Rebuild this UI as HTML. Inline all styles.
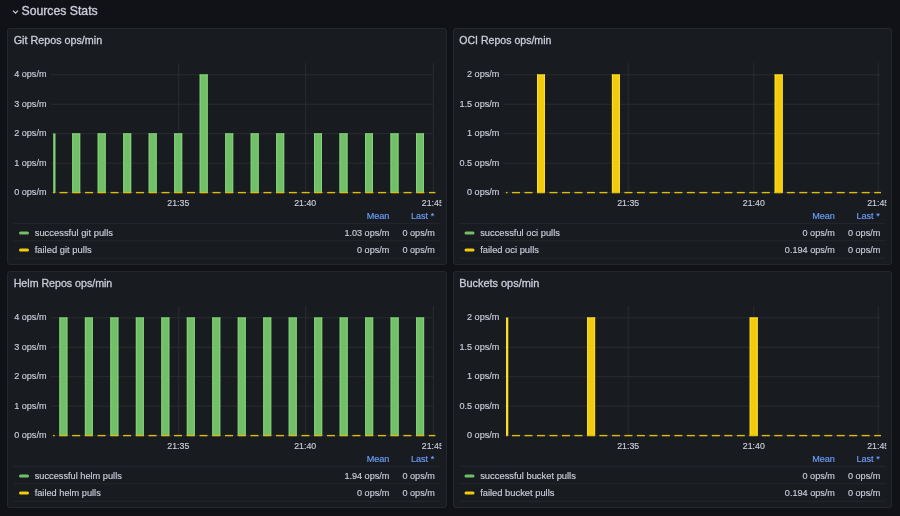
<!DOCTYPE html>
<html><head><meta charset="utf-8"><style>
html,body{margin:0;padding:0;background:#111217;width:900px;height:516px;overflow:hidden;font-family:"Liberation Sans", sans-serif;}
.panel{position:absolute;background:#181b1f;border:1px solid #25272d;border-radius:3px;box-sizing:border-box;}
svg{position:absolute;left:0;top:0;will-change:transform;}
text{font-family:"Liberation Sans", sans-serif;}
</style></head><body>
<div class="panel" style="left:7px;top:27.5px;width:439.5px;height:237px;"></div>
<div class="panel" style="left:452.5px;top:27.5px;width:439.5px;height:237px;"></div>
<div class="panel" style="left:7px;top:270.5px;width:439.5px;height:237px;"></div>
<div class="panel" style="left:452.5px;top:270.5px;width:439.5px;height:237px;"></div>
<svg width="900" height="516" viewBox="0 0 900 516">
<path d="M13 10.6 L15.5 13.1 L18 10.6" fill="none" stroke="#ccccdc" stroke-width="1.2"/>
<text x="21.5" y="15.1" font-size="12.2" fill="#ccccdc" text-anchor="start" stroke="#ccccdc" stroke-width="0.35" textLength="76.2" lengthAdjust="spacingAndGlyphs">Sources Stats</text>
<text x="13.7" y="44" font-size="10.75" fill="#ccccdc" text-anchor="start" stroke="#ccccdc" stroke-width="0.3" textLength="88.5" lengthAdjust="spacingAndGlyphs">Git Repos ops/min</text>
<line x1="51" y1="74.8" x2="434" y2="74.8" stroke="#2a2c31" stroke-width="1"/>
<text x="46.5" y="77.4" font-size="9.1" fill="#ccccdc" text-anchor="end" stroke="#ccccdc" stroke-width="0.15">4 ops/m</text>
<line x1="51" y1="104.25" x2="434" y2="104.25" stroke="#2a2c31" stroke-width="1"/>
<text x="46.5" y="106.85" font-size="9.1" fill="#ccccdc" text-anchor="end" stroke="#ccccdc" stroke-width="0.15">3 ops/m</text>
<line x1="51" y1="133.7" x2="434" y2="133.7" stroke="#2a2c31" stroke-width="1"/>
<text x="46.5" y="136.3" font-size="9.1" fill="#ccccdc" text-anchor="end" stroke="#ccccdc" stroke-width="0.15">2 ops/m</text>
<line x1="51" y1="163.15" x2="434" y2="163.15" stroke="#2a2c31" stroke-width="1"/>
<text x="46.5" y="165.75" font-size="9.1" fill="#ccccdc" text-anchor="end" stroke="#ccccdc" stroke-width="0.15">1 ops/m</text>
<line x1="51" y1="192.6" x2="434" y2="192.6" stroke="#2a2c31" stroke-width="1"/>
<text x="46.5" y="195.2" font-size="9.1" fill="#ccccdc" text-anchor="end" stroke="#ccccdc" stroke-width="0.15">0 ops/m</text>
<line x1="178.8" y1="63" x2="178.8" y2="192.6" stroke="#2a2c31" stroke-width="1"/>
<line x1="305.7" y1="63" x2="305.7" y2="192.6" stroke="#2a2c31" stroke-width="1"/>
<line x1="433.3" y1="63" x2="433.3" y2="192.6" stroke="#2a2c31" stroke-width="1"/>
<clipPath id="xgit"><rect x="0" y="190.0" width="441.4" height="20"/></clipPath><g clip-path="url(#xgit)">
<text x="178.3" y="205.9" font-size="9.2" fill="#ccccdc" text-anchor="middle" stroke="#ccccdc" stroke-width="0.15" textLength="22" lengthAdjust="spacingAndGlyphs">21:35</text>
<text x="305.2" y="205.9" font-size="9.2" fill="#ccccdc" text-anchor="middle" stroke="#ccccdc" stroke-width="0.15" textLength="22" lengthAdjust="spacingAndGlyphs">21:40</text>
<text x="432.8" y="205.9" font-size="9.2" fill="#ccccdc" text-anchor="middle" stroke="#ccccdc" stroke-width="0.15" textLength="22" lengthAdjust="spacingAndGlyphs">21:45</text>
</g>
<clipPath id="cgit"><rect x="53" y="40.0" width="382.4" height="170"/></clipPath>
<g clip-path="url(#cgit)">
<rect x="53.2" y="133.4" width="2.3" height="59.5" fill="#7fd474"/>
<rect x="72.2" y="133.4" width="8" height="59.5" fill="#73bf69"/>
<rect x="72.2" y="133.4" width="1" height="59.5" fill="#7fd474"/>
<rect x="79.2" y="133.4" width="1" height="59.5" fill="#7fd474"/>
<rect x="72.2" y="133.4" width="8" height="1" fill="#7fd474"/>
<rect x="97.7" y="133.4" width="8" height="59.5" fill="#73bf69"/>
<rect x="97.7" y="133.4" width="1" height="59.5" fill="#7fd474"/>
<rect x="104.7" y="133.4" width="1" height="59.5" fill="#7fd474"/>
<rect x="97.7" y="133.4" width="8" height="1" fill="#7fd474"/>
<rect x="123.2" y="133.4" width="8" height="59.5" fill="#73bf69"/>
<rect x="123.2" y="133.4" width="1" height="59.5" fill="#7fd474"/>
<rect x="130.2" y="133.4" width="1" height="59.5" fill="#7fd474"/>
<rect x="123.2" y="133.4" width="8" height="1" fill="#7fd474"/>
<rect x="148.7" y="133.4" width="8" height="59.5" fill="#73bf69"/>
<rect x="148.7" y="133.4" width="1" height="59.5" fill="#7fd474"/>
<rect x="155.7" y="133.4" width="1" height="59.5" fill="#7fd474"/>
<rect x="148.7" y="133.4" width="8" height="1" fill="#7fd474"/>
<rect x="174.2" y="133.4" width="8" height="59.5" fill="#73bf69"/>
<rect x="174.2" y="133.4" width="1" height="59.5" fill="#7fd474"/>
<rect x="181.2" y="133.4" width="1" height="59.5" fill="#7fd474"/>
<rect x="174.2" y="133.4" width="8" height="1" fill="#7fd474"/>
<rect x="199.7" y="74.5" width="8" height="118.4" fill="#73bf69"/>
<rect x="199.7" y="74.5" width="1" height="118.4" fill="#7fd474"/>
<rect x="206.7" y="74.5" width="1" height="118.4" fill="#7fd474"/>
<rect x="199.7" y="74.5" width="8" height="1" fill="#7fd474"/>
<rect x="225.2" y="133.4" width="8" height="59.5" fill="#73bf69"/>
<rect x="225.2" y="133.4" width="1" height="59.5" fill="#7fd474"/>
<rect x="232.2" y="133.4" width="1" height="59.5" fill="#7fd474"/>
<rect x="225.2" y="133.4" width="8" height="1" fill="#7fd474"/>
<rect x="250.7" y="133.4" width="8" height="59.5" fill="#73bf69"/>
<rect x="250.7" y="133.4" width="1" height="59.5" fill="#7fd474"/>
<rect x="257.7" y="133.4" width="1" height="59.5" fill="#7fd474"/>
<rect x="250.7" y="133.4" width="8" height="1" fill="#7fd474"/>
<rect x="276.2" y="133.4" width="8" height="59.5" fill="#73bf69"/>
<rect x="276.2" y="133.4" width="1" height="59.5" fill="#7fd474"/>
<rect x="283.2" y="133.4" width="1" height="59.5" fill="#7fd474"/>
<rect x="276.2" y="133.4" width="8" height="1" fill="#7fd474"/>
<rect x="314" y="133.4" width="8" height="59.5" fill="#73bf69"/>
<rect x="314" y="133.4" width="1" height="59.5" fill="#7fd474"/>
<rect x="321" y="133.4" width="1" height="59.5" fill="#7fd474"/>
<rect x="314" y="133.4" width="8" height="1" fill="#7fd474"/>
<rect x="339.5" y="133.4" width="8" height="59.5" fill="#73bf69"/>
<rect x="339.5" y="133.4" width="1" height="59.5" fill="#7fd474"/>
<rect x="346.5" y="133.4" width="1" height="59.5" fill="#7fd474"/>
<rect x="339.5" y="133.4" width="8" height="1" fill="#7fd474"/>
<rect x="365" y="133.4" width="8" height="59.5" fill="#73bf69"/>
<rect x="365" y="133.4" width="1" height="59.5" fill="#7fd474"/>
<rect x="372" y="133.4" width="1" height="59.5" fill="#7fd474"/>
<rect x="365" y="133.4" width="8" height="1" fill="#7fd474"/>
<rect x="390.5" y="133.4" width="8" height="59.5" fill="#73bf69"/>
<rect x="390.5" y="133.4" width="1" height="59.5" fill="#7fd474"/>
<rect x="397.5" y="133.4" width="1" height="59.5" fill="#7fd474"/>
<rect x="390.5" y="133.4" width="8" height="1" fill="#7fd474"/>
<rect x="416" y="133.4" width="8" height="59.5" fill="#73bf69"/>
<rect x="416" y="133.4" width="1" height="59.5" fill="#7fd474"/>
<rect x="423" y="133.4" width="1" height="59.5" fill="#7fd474"/>
<rect x="416" y="133.4" width="8" height="1" fill="#7fd474"/>
<rect x="34.12" y="191.9" width="8" height="1.4" fill="#dcbc0c"/>
<rect x="46.86" y="191.9" width="8" height="1.4" fill="#dcbc0c"/>
<rect x="59.6" y="191.9" width="8" height="1.4" fill="#dcbc0c"/>
<rect x="72.34" y="191.9" width="8" height="1.4" fill="#dcbc0c"/>
<rect x="85.08" y="191.9" width="8" height="1.4" fill="#dcbc0c"/>
<rect x="97.82" y="191.9" width="8" height="1.4" fill="#dcbc0c"/>
<rect x="110.56" y="191.9" width="8" height="1.4" fill="#dcbc0c"/>
<rect x="123.3" y="191.9" width="8" height="1.4" fill="#dcbc0c"/>
<rect x="136.04" y="191.9" width="8" height="1.4" fill="#dcbc0c"/>
<rect x="148.78" y="191.9" width="8" height="1.4" fill="#dcbc0c"/>
<rect x="161.52" y="191.9" width="8" height="1.4" fill="#dcbc0c"/>
<rect x="174.26" y="191.9" width="8" height="1.4" fill="#dcbc0c"/>
<rect x="187" y="191.9" width="8" height="1.4" fill="#dcbc0c"/>
<rect x="199.74" y="191.9" width="8" height="1.4" fill="#dcbc0c"/>
<rect x="212.48" y="191.9" width="8" height="1.4" fill="#dcbc0c"/>
<rect x="225.22" y="191.9" width="8" height="1.4" fill="#dcbc0c"/>
<rect x="237.96" y="191.9" width="8" height="1.4" fill="#dcbc0c"/>
<rect x="250.7" y="191.9" width="8" height="1.4" fill="#dcbc0c"/>
<rect x="263.44" y="191.9" width="8" height="1.4" fill="#dcbc0c"/>
<rect x="276.18" y="191.9" width="8" height="1.4" fill="#dcbc0c"/>
<rect x="288.92" y="191.9" width="8" height="1.4" fill="#dcbc0c"/>
<rect x="301.66" y="191.9" width="8" height="1.4" fill="#dcbc0c"/>
<rect x="314.4" y="191.9" width="8" height="1.4" fill="#dcbc0c"/>
<rect x="327.14" y="191.9" width="8" height="1.4" fill="#dcbc0c"/>
<rect x="339.88" y="191.9" width="8" height="1.4" fill="#dcbc0c"/>
<rect x="352.62" y="191.9" width="8" height="1.4" fill="#dcbc0c"/>
<rect x="365.36" y="191.9" width="8" height="1.4" fill="#dcbc0c"/>
<rect x="378.1" y="191.9" width="8" height="1.4" fill="#dcbc0c"/>
<rect x="390.84" y="191.9" width="8" height="1.4" fill="#dcbc0c"/>
<rect x="403.58" y="191.9" width="8" height="1.4" fill="#dcbc0c"/>
<rect x="416.32" y="191.9" width="8" height="1.4" fill="#dcbc0c"/>
<rect x="429.06" y="191.9" width="8" height="1.4" fill="#dcbc0c"/>
</g>
<line x1="13.4" y1="223.3" x2="440.2" y2="223.3" stroke="#25272d" stroke-width="1"/>
<line x1="13.4" y1="240.8" x2="440.2" y2="240.8" stroke="#25272d" stroke-width="1"/>
<line x1="13.4" y1="258.2" x2="440.2" y2="258.2" stroke="#25272d" stroke-width="1"/>
<text x="389.4" y="218.8" font-size="9.1" fill="#6e9fff" text-anchor="end" stroke="#6e9fff" stroke-width="0.15">Mean</text>
<text x="434.2" y="218.8" font-size="9.1" fill="#6e9fff" text-anchor="end" stroke="#6e9fff" stroke-width="0.15">Last *</text>
<rect x="19" y="231.5" width="10" height="3" fill="#73bf69" rx="1.5"/>
<text x="34.7" y="235.7" font-size="9.4" fill="#ccccdc" text-anchor="start" stroke="#ccccdc" stroke-width="0.15" textLength="78.3" lengthAdjust="spacingAndGlyphs">successful git pulls</text>
<text x="389.4" y="235.7" font-size="9.1" fill="#ccccdc" text-anchor="end" stroke="#ccccdc" stroke-width="0.15">1.03 ops/m</text>
<text x="434.8" y="235.7" font-size="9.1" fill="#ccccdc" text-anchor="end" stroke="#ccccdc" stroke-width="0.15">0 ops/m</text>
<rect x="19" y="248.5" width="10" height="3" fill="#f2cc0c" rx="1.5"/>
<text x="34.7" y="252.7" font-size="9.4" fill="#ccccdc" text-anchor="start" stroke="#ccccdc" stroke-width="0.15" textLength="57" lengthAdjust="spacingAndGlyphs">failed git pulls</text>
<text x="389.4" y="252.7" font-size="9.1" fill="#ccccdc" text-anchor="end" stroke="#ccccdc" stroke-width="0.15">0 ops/m</text>
<text x="434.8" y="252.7" font-size="9.1" fill="#ccccdc" text-anchor="end" stroke="#ccccdc" stroke-width="0.15">0 ops/m</text>
<text x="459.2" y="44" font-size="10.75" fill="#ccccdc" text-anchor="start" stroke="#ccccdc" stroke-width="0.3" textLength="92.2" lengthAdjust="spacingAndGlyphs">OCI Repos ops/min</text>
<line x1="503.2" y1="74.8" x2="880" y2="74.8" stroke="#2a2c31" stroke-width="1"/>
<text x="499.4" y="77.4" font-size="9.1" fill="#ccccdc" text-anchor="end" stroke="#ccccdc" stroke-width="0.15">2 ops/m</text>
<line x1="503.2" y1="104.25" x2="880" y2="104.25" stroke="#2a2c31" stroke-width="1"/>
<text x="499.4" y="106.85" font-size="9.1" fill="#ccccdc" text-anchor="end" stroke="#ccccdc" stroke-width="0.15">1.5 ops/m</text>
<line x1="503.2" y1="133.7" x2="880" y2="133.7" stroke="#2a2c31" stroke-width="1"/>
<text x="499.4" y="136.3" font-size="9.1" fill="#ccccdc" text-anchor="end" stroke="#ccccdc" stroke-width="0.15">1 ops/m</text>
<line x1="503.2" y1="163.15" x2="880" y2="163.15" stroke="#2a2c31" stroke-width="1"/>
<text x="499.4" y="165.75" font-size="9.1" fill="#ccccdc" text-anchor="end" stroke="#ccccdc" stroke-width="0.15">0.5 ops/m</text>
<line x1="503.2" y1="192.6" x2="880" y2="192.6" stroke="#2a2c31" stroke-width="1"/>
<text x="499.4" y="195.2" font-size="9.1" fill="#ccccdc" text-anchor="end" stroke="#ccccdc" stroke-width="0.15">0 ops/m</text>
<line x1="628.2" y1="63" x2="628.2" y2="192.6" stroke="#2a2c31" stroke-width="1"/>
<line x1="753.8" y1="63" x2="753.8" y2="192.6" stroke="#2a2c31" stroke-width="1"/>
<line x1="878.2" y1="63" x2="878.2" y2="192.6" stroke="#2a2c31" stroke-width="1"/>
<clipPath id="xoci"><rect x="0" y="190.0" width="886.3" height="20"/></clipPath><g clip-path="url(#xoci)">
<text x="628.2" y="205.9" font-size="9.2" fill="#ccccdc" text-anchor="middle" stroke="#ccccdc" stroke-width="0.15" textLength="22" lengthAdjust="spacingAndGlyphs">21:35</text>
<text x="753.8" y="205.9" font-size="9.2" fill="#ccccdc" text-anchor="middle" stroke="#ccccdc" stroke-width="0.15" textLength="22" lengthAdjust="spacingAndGlyphs">21:40</text>
<text x="878.2" y="205.9" font-size="9.2" fill="#ccccdc" text-anchor="middle" stroke="#ccccdc" stroke-width="0.15" textLength="22" lengthAdjust="spacingAndGlyphs">21:45</text>
</g>
<clipPath id="coci"><rect x="506" y="40.0" width="375.1" height="170"/></clipPath>
<g clip-path="url(#coci)">
<rect x="537" y="74.5" width="8" height="118.4" fill="#f2cc0c"/>
<rect x="537" y="74.5" width="1" height="118.4" fill="#fade2a"/>
<rect x="544" y="74.5" width="1" height="118.4" fill="#fade2a"/>
<rect x="537" y="74.5" width="8" height="1" fill="#fade2a"/>
<rect x="611.9" y="74.5" width="8" height="118.4" fill="#f2cc0c"/>
<rect x="611.9" y="74.5" width="1" height="118.4" fill="#fade2a"/>
<rect x="618.9" y="74.5" width="1" height="118.4" fill="#fade2a"/>
<rect x="611.9" y="74.5" width="8" height="1" fill="#fade2a"/>
<rect x="774.7" y="74.5" width="8" height="118.4" fill="#f2cc0c"/>
<rect x="774.7" y="74.5" width="1" height="118.4" fill="#fade2a"/>
<rect x="781.7" y="74.5" width="1" height="118.4" fill="#fade2a"/>
<rect x="774.7" y="74.5" width="8" height="1" fill="#fade2a"/>
<rect x="487.02" y="191.9" width="8" height="1.4" fill="#dcbc0c"/>
<rect x="499.51" y="191.9" width="8" height="1.4" fill="#dcbc0c"/>
<rect x="512" y="191.9" width="8" height="1.4" fill="#dcbc0c"/>
<rect x="524.49" y="191.9" width="8" height="1.4" fill="#dcbc0c"/>
<rect x="536.98" y="191.9" width="8" height="1.4" fill="#dcbc0c"/>
<rect x="549.47" y="191.9" width="8" height="1.4" fill="#dcbc0c"/>
<rect x="561.96" y="191.9" width="8" height="1.4" fill="#dcbc0c"/>
<rect x="574.45" y="191.9" width="8" height="1.4" fill="#dcbc0c"/>
<rect x="586.94" y="191.9" width="8" height="1.4" fill="#dcbc0c"/>
<rect x="599.43" y="191.9" width="8" height="1.4" fill="#dcbc0c"/>
<rect x="611.92" y="191.9" width="8" height="1.4" fill="#dcbc0c"/>
<rect x="624.41" y="191.9" width="8" height="1.4" fill="#dcbc0c"/>
<rect x="636.9" y="191.9" width="8" height="1.4" fill="#dcbc0c"/>
<rect x="649.39" y="191.9" width="8" height="1.4" fill="#dcbc0c"/>
<rect x="661.88" y="191.9" width="8" height="1.4" fill="#dcbc0c"/>
<rect x="674.37" y="191.9" width="8" height="1.4" fill="#dcbc0c"/>
<rect x="686.86" y="191.9" width="8" height="1.4" fill="#dcbc0c"/>
<rect x="699.35" y="191.9" width="8" height="1.4" fill="#dcbc0c"/>
<rect x="711.84" y="191.9" width="8" height="1.4" fill="#dcbc0c"/>
<rect x="724.33" y="191.9" width="8" height="1.4" fill="#dcbc0c"/>
<rect x="736.82" y="191.9" width="8" height="1.4" fill="#dcbc0c"/>
<rect x="749.31" y="191.9" width="8" height="1.4" fill="#dcbc0c"/>
<rect x="761.8" y="191.9" width="8" height="1.4" fill="#dcbc0c"/>
<rect x="774.29" y="191.9" width="8" height="1.4" fill="#dcbc0c"/>
<rect x="786.78" y="191.9" width="8" height="1.4" fill="#dcbc0c"/>
<rect x="799.27" y="191.9" width="8" height="1.4" fill="#dcbc0c"/>
<rect x="811.76" y="191.9" width="8" height="1.4" fill="#dcbc0c"/>
<rect x="824.25" y="191.9" width="8" height="1.4" fill="#dcbc0c"/>
<rect x="836.74" y="191.9" width="8" height="1.4" fill="#dcbc0c"/>
<rect x="849.23" y="191.9" width="8" height="1.4" fill="#dcbc0c"/>
<rect x="861.72" y="191.9" width="8" height="1.4" fill="#dcbc0c"/>
<rect x="874.21" y="191.9" width="8" height="1.4" fill="#dcbc0c"/>
</g>
<line x1="458.9" y1="223.3" x2="885.7" y2="223.3" stroke="#25272d" stroke-width="1"/>
<line x1="458.9" y1="240.8" x2="885.7" y2="240.8" stroke="#25272d" stroke-width="1"/>
<line x1="458.9" y1="258.2" x2="885.7" y2="258.2" stroke="#25272d" stroke-width="1"/>
<text x="834.9" y="218.8" font-size="9.1" fill="#6e9fff" text-anchor="end" stroke="#6e9fff" stroke-width="0.15">Mean</text>
<text x="879.7" y="218.8" font-size="9.1" fill="#6e9fff" text-anchor="end" stroke="#6e9fff" stroke-width="0.15">Last *</text>
<rect x="464.5" y="231.5" width="10" height="3" fill="#73bf69" rx="1.5"/>
<text x="480.2" y="235.7" font-size="9.4" fill="#ccccdc" text-anchor="start" stroke="#ccccdc" stroke-width="0.15" textLength="79.7" lengthAdjust="spacingAndGlyphs">successful oci pulls</text>
<text x="834.9" y="235.7" font-size="9.1" fill="#ccccdc" text-anchor="end" stroke="#ccccdc" stroke-width="0.15">0 ops/m</text>
<text x="880.3" y="235.7" font-size="9.1" fill="#ccccdc" text-anchor="end" stroke="#ccccdc" stroke-width="0.15">0 ops/m</text>
<rect x="464.5" y="248.5" width="10" height="3" fill="#f2cc0c" rx="1.5"/>
<text x="480.2" y="252.7" font-size="9.4" fill="#ccccdc" text-anchor="start" stroke="#ccccdc" stroke-width="0.15" textLength="58.7" lengthAdjust="spacingAndGlyphs">failed oci pulls</text>
<text x="834.9" y="252.7" font-size="9.1" fill="#ccccdc" text-anchor="end" stroke="#ccccdc" stroke-width="0.15">0.194 ops/m</text>
<text x="880.3" y="252.7" font-size="9.1" fill="#ccccdc" text-anchor="end" stroke="#ccccdc" stroke-width="0.15">0 ops/m</text>
<text x="13.7" y="287" font-size="10.75" fill="#ccccdc" text-anchor="start" stroke="#ccccdc" stroke-width="0.3" textLength="98.6" lengthAdjust="spacingAndGlyphs">Helm Repos ops/min</text>
<line x1="51" y1="317.8" x2="434" y2="317.8" stroke="#2a2c31" stroke-width="1"/>
<text x="46.5" y="320.4" font-size="9.1" fill="#ccccdc" text-anchor="end" stroke="#ccccdc" stroke-width="0.15">4 ops/m</text>
<line x1="51" y1="347.25" x2="434" y2="347.25" stroke="#2a2c31" stroke-width="1"/>
<text x="46.5" y="349.85" font-size="9.1" fill="#ccccdc" text-anchor="end" stroke="#ccccdc" stroke-width="0.15">3 ops/m</text>
<line x1="51" y1="376.7" x2="434" y2="376.7" stroke="#2a2c31" stroke-width="1"/>
<text x="46.5" y="379.3" font-size="9.1" fill="#ccccdc" text-anchor="end" stroke="#ccccdc" stroke-width="0.15">2 ops/m</text>
<line x1="51" y1="406.15" x2="434" y2="406.15" stroke="#2a2c31" stroke-width="1"/>
<text x="46.5" y="408.75" font-size="9.1" fill="#ccccdc" text-anchor="end" stroke="#ccccdc" stroke-width="0.15">1 ops/m</text>
<line x1="51" y1="435.6" x2="434" y2="435.6" stroke="#2a2c31" stroke-width="1"/>
<text x="46.5" y="438.2" font-size="9.1" fill="#ccccdc" text-anchor="end" stroke="#ccccdc" stroke-width="0.15">0 ops/m</text>
<line x1="178.8" y1="306" x2="178.8" y2="435.6" stroke="#2a2c31" stroke-width="1"/>
<line x1="305.7" y1="306" x2="305.7" y2="435.6" stroke="#2a2c31" stroke-width="1"/>
<line x1="433.3" y1="306" x2="433.3" y2="435.6" stroke="#2a2c31" stroke-width="1"/>
<clipPath id="xhelm"><rect x="0" y="433.0" width="441.4" height="20"/></clipPath><g clip-path="url(#xhelm)">
<text x="178.3" y="448.9" font-size="9.2" fill="#ccccdc" text-anchor="middle" stroke="#ccccdc" stroke-width="0.15" textLength="22" lengthAdjust="spacingAndGlyphs">21:35</text>
<text x="305.2" y="448.9" font-size="9.2" fill="#ccccdc" text-anchor="middle" stroke="#ccccdc" stroke-width="0.15" textLength="22" lengthAdjust="spacingAndGlyphs">21:40</text>
<text x="432.8" y="448.9" font-size="9.2" fill="#ccccdc" text-anchor="middle" stroke="#ccccdc" stroke-width="0.15" textLength="22" lengthAdjust="spacingAndGlyphs">21:45</text>
</g>
<clipPath id="chelm"><rect x="53" y="283.0" width="382.4" height="170"/></clipPath>
<g clip-path="url(#chelm)">
<rect x="59.4" y="317.5" width="8" height="118.4" fill="#73bf69"/>
<rect x="59.4" y="317.5" width="1" height="118.4" fill="#7fd474"/>
<rect x="66.4" y="317.5" width="1" height="118.4" fill="#7fd474"/>
<rect x="59.4" y="317.5" width="8" height="1" fill="#7fd474"/>
<rect x="84.88" y="317.5" width="8" height="118.4" fill="#73bf69"/>
<rect x="84.88" y="317.5" width="1" height="118.4" fill="#7fd474"/>
<rect x="91.88" y="317.5" width="1" height="118.4" fill="#7fd474"/>
<rect x="84.88" y="317.5" width="8" height="1" fill="#7fd474"/>
<rect x="110.36" y="317.5" width="8" height="118.4" fill="#73bf69"/>
<rect x="110.36" y="317.5" width="1" height="118.4" fill="#7fd474"/>
<rect x="117.36" y="317.5" width="1" height="118.4" fill="#7fd474"/>
<rect x="110.36" y="317.5" width="8" height="1" fill="#7fd474"/>
<rect x="135.84" y="317.5" width="8" height="118.4" fill="#73bf69"/>
<rect x="135.84" y="317.5" width="1" height="118.4" fill="#7fd474"/>
<rect x="142.84" y="317.5" width="1" height="118.4" fill="#7fd474"/>
<rect x="135.84" y="317.5" width="8" height="1" fill="#7fd474"/>
<rect x="161.32" y="317.5" width="8" height="118.4" fill="#73bf69"/>
<rect x="161.32" y="317.5" width="1" height="118.4" fill="#7fd474"/>
<rect x="168.32" y="317.5" width="1" height="118.4" fill="#7fd474"/>
<rect x="161.32" y="317.5" width="8" height="1" fill="#7fd474"/>
<rect x="186.8" y="317.5" width="8" height="118.4" fill="#73bf69"/>
<rect x="186.8" y="317.5" width="1" height="118.4" fill="#7fd474"/>
<rect x="193.8" y="317.5" width="1" height="118.4" fill="#7fd474"/>
<rect x="186.8" y="317.5" width="8" height="1" fill="#7fd474"/>
<rect x="212.28" y="317.5" width="8" height="118.4" fill="#73bf69"/>
<rect x="212.28" y="317.5" width="1" height="118.4" fill="#7fd474"/>
<rect x="219.28" y="317.5" width="1" height="118.4" fill="#7fd474"/>
<rect x="212.28" y="317.5" width="8" height="1" fill="#7fd474"/>
<rect x="237.76" y="317.5" width="8" height="118.4" fill="#73bf69"/>
<rect x="237.76" y="317.5" width="1" height="118.4" fill="#7fd474"/>
<rect x="244.76" y="317.5" width="1" height="118.4" fill="#7fd474"/>
<rect x="237.76" y="317.5" width="8" height="1" fill="#7fd474"/>
<rect x="263.24" y="317.5" width="8" height="118.4" fill="#73bf69"/>
<rect x="263.24" y="317.5" width="1" height="118.4" fill="#7fd474"/>
<rect x="270.24" y="317.5" width="1" height="118.4" fill="#7fd474"/>
<rect x="263.24" y="317.5" width="8" height="1" fill="#7fd474"/>
<rect x="288.72" y="317.5" width="8" height="118.4" fill="#73bf69"/>
<rect x="288.72" y="317.5" width="1" height="118.4" fill="#7fd474"/>
<rect x="295.72" y="317.5" width="1" height="118.4" fill="#7fd474"/>
<rect x="288.72" y="317.5" width="8" height="1" fill="#7fd474"/>
<rect x="314.2" y="317.5" width="8" height="118.4" fill="#73bf69"/>
<rect x="314.2" y="317.5" width="1" height="118.4" fill="#7fd474"/>
<rect x="321.2" y="317.5" width="1" height="118.4" fill="#7fd474"/>
<rect x="314.2" y="317.5" width="8" height="1" fill="#7fd474"/>
<rect x="339.68" y="317.5" width="8" height="118.4" fill="#73bf69"/>
<rect x="339.68" y="317.5" width="1" height="118.4" fill="#7fd474"/>
<rect x="346.68" y="317.5" width="1" height="118.4" fill="#7fd474"/>
<rect x="339.68" y="317.5" width="8" height="1" fill="#7fd474"/>
<rect x="365.16" y="317.5" width="8" height="118.4" fill="#73bf69"/>
<rect x="365.16" y="317.5" width="1" height="118.4" fill="#7fd474"/>
<rect x="372.16" y="317.5" width="1" height="118.4" fill="#7fd474"/>
<rect x="365.16" y="317.5" width="8" height="1" fill="#7fd474"/>
<rect x="390.64" y="317.5" width="8" height="118.4" fill="#73bf69"/>
<rect x="390.64" y="317.5" width="1" height="118.4" fill="#7fd474"/>
<rect x="397.64" y="317.5" width="1" height="118.4" fill="#7fd474"/>
<rect x="390.64" y="317.5" width="8" height="1" fill="#7fd474"/>
<rect x="416.12" y="317.5" width="8" height="118.4" fill="#73bf69"/>
<rect x="416.12" y="317.5" width="1" height="118.4" fill="#7fd474"/>
<rect x="423.12" y="317.5" width="1" height="118.4" fill="#7fd474"/>
<rect x="416.12" y="317.5" width="8" height="1" fill="#7fd474"/>
<rect x="33.92" y="434.9" width="8" height="1.4" fill="#dcbc0c"/>
<rect x="46.66" y="434.9" width="8" height="1.4" fill="#dcbc0c"/>
<rect x="59.4" y="434.9" width="8" height="1.4" fill="#dcbc0c"/>
<rect x="72.14" y="434.9" width="8" height="1.4" fill="#dcbc0c"/>
<rect x="84.88" y="434.9" width="8" height="1.4" fill="#dcbc0c"/>
<rect x="97.62" y="434.9" width="8" height="1.4" fill="#dcbc0c"/>
<rect x="110.36" y="434.9" width="8" height="1.4" fill="#dcbc0c"/>
<rect x="123.1" y="434.9" width="8" height="1.4" fill="#dcbc0c"/>
<rect x="135.84" y="434.9" width="8" height="1.4" fill="#dcbc0c"/>
<rect x="148.58" y="434.9" width="8" height="1.4" fill="#dcbc0c"/>
<rect x="161.32" y="434.9" width="8" height="1.4" fill="#dcbc0c"/>
<rect x="174.06" y="434.9" width="8" height="1.4" fill="#dcbc0c"/>
<rect x="186.8" y="434.9" width="8" height="1.4" fill="#dcbc0c"/>
<rect x="199.54" y="434.9" width="8" height="1.4" fill="#dcbc0c"/>
<rect x="212.28" y="434.9" width="8" height="1.4" fill="#dcbc0c"/>
<rect x="225.02" y="434.9" width="8" height="1.4" fill="#dcbc0c"/>
<rect x="237.76" y="434.9" width="8" height="1.4" fill="#dcbc0c"/>
<rect x="250.5" y="434.9" width="8" height="1.4" fill="#dcbc0c"/>
<rect x="263.24" y="434.9" width="8" height="1.4" fill="#dcbc0c"/>
<rect x="275.98" y="434.9" width="8" height="1.4" fill="#dcbc0c"/>
<rect x="288.72" y="434.9" width="8" height="1.4" fill="#dcbc0c"/>
<rect x="301.46" y="434.9" width="8" height="1.4" fill="#dcbc0c"/>
<rect x="314.2" y="434.9" width="8" height="1.4" fill="#dcbc0c"/>
<rect x="326.94" y="434.9" width="8" height="1.4" fill="#dcbc0c"/>
<rect x="339.68" y="434.9" width="8" height="1.4" fill="#dcbc0c"/>
<rect x="352.42" y="434.9" width="8" height="1.4" fill="#dcbc0c"/>
<rect x="365.16" y="434.9" width="8" height="1.4" fill="#dcbc0c"/>
<rect x="377.9" y="434.9" width="8" height="1.4" fill="#dcbc0c"/>
<rect x="390.64" y="434.9" width="8" height="1.4" fill="#dcbc0c"/>
<rect x="403.38" y="434.9" width="8" height="1.4" fill="#dcbc0c"/>
<rect x="416.12" y="434.9" width="8" height="1.4" fill="#dcbc0c"/>
<rect x="428.86" y="434.9" width="8" height="1.4" fill="#dcbc0c"/>
</g>
<line x1="13.4" y1="466.3" x2="440.2" y2="466.3" stroke="#25272d" stroke-width="1"/>
<line x1="13.4" y1="483.8" x2="440.2" y2="483.8" stroke="#25272d" stroke-width="1"/>
<line x1="13.4" y1="501.2" x2="440.2" y2="501.2" stroke="#25272d" stroke-width="1"/>
<text x="389.4" y="461.8" font-size="9.1" fill="#6e9fff" text-anchor="end" stroke="#6e9fff" stroke-width="0.15">Mean</text>
<text x="434.2" y="461.8" font-size="9.1" fill="#6e9fff" text-anchor="end" stroke="#6e9fff" stroke-width="0.15">Last *</text>
<rect x="19" y="474.5" width="10" height="3" fill="#73bf69" rx="1.5"/>
<text x="34.7" y="478.7" font-size="9.4" fill="#ccccdc" text-anchor="start" stroke="#ccccdc" stroke-width="0.15" textLength="87.1" lengthAdjust="spacingAndGlyphs">successful helm pulls</text>
<text x="389.4" y="478.7" font-size="9.1" fill="#ccccdc" text-anchor="end" stroke="#ccccdc" stroke-width="0.15">1.94 ops/m</text>
<text x="434.8" y="478.7" font-size="9.1" fill="#ccccdc" text-anchor="end" stroke="#ccccdc" stroke-width="0.15">0 ops/m</text>
<rect x="19" y="491.5" width="10" height="3" fill="#f2cc0c" rx="1.5"/>
<text x="34.7" y="495.7" font-size="9.4" fill="#ccccdc" text-anchor="start" stroke="#ccccdc" stroke-width="0.15" textLength="66.1" lengthAdjust="spacingAndGlyphs">failed helm pulls</text>
<text x="389.4" y="495.7" font-size="9.1" fill="#ccccdc" text-anchor="end" stroke="#ccccdc" stroke-width="0.15">0 ops/m</text>
<text x="434.8" y="495.7" font-size="9.1" fill="#ccccdc" text-anchor="end" stroke="#ccccdc" stroke-width="0.15">0 ops/m</text>
<text x="459.2" y="287" font-size="10.75" fill="#ccccdc" text-anchor="start" stroke="#ccccdc" stroke-width="0.3" textLength="80.1" lengthAdjust="spacingAndGlyphs">Buckets ops/min</text>
<line x1="503.2" y1="317.8" x2="880" y2="317.8" stroke="#2a2c31" stroke-width="1"/>
<text x="499.4" y="320.4" font-size="9.1" fill="#ccccdc" text-anchor="end" stroke="#ccccdc" stroke-width="0.15">2 ops/m</text>
<line x1="503.2" y1="347.25" x2="880" y2="347.25" stroke="#2a2c31" stroke-width="1"/>
<text x="499.4" y="349.85" font-size="9.1" fill="#ccccdc" text-anchor="end" stroke="#ccccdc" stroke-width="0.15">1.5 ops/m</text>
<line x1="503.2" y1="376.7" x2="880" y2="376.7" stroke="#2a2c31" stroke-width="1"/>
<text x="499.4" y="379.3" font-size="9.1" fill="#ccccdc" text-anchor="end" stroke="#ccccdc" stroke-width="0.15">1 ops/m</text>
<line x1="503.2" y1="406.15" x2="880" y2="406.15" stroke="#2a2c31" stroke-width="1"/>
<text x="499.4" y="408.75" font-size="9.1" fill="#ccccdc" text-anchor="end" stroke="#ccccdc" stroke-width="0.15">0.5 ops/m</text>
<line x1="503.2" y1="435.6" x2="880" y2="435.6" stroke="#2a2c31" stroke-width="1"/>
<text x="499.4" y="438.2" font-size="9.1" fill="#ccccdc" text-anchor="end" stroke="#ccccdc" stroke-width="0.15">0 ops/m</text>
<line x1="628.2" y1="306" x2="628.2" y2="435.6" stroke="#2a2c31" stroke-width="1"/>
<line x1="753.8" y1="306" x2="753.8" y2="435.6" stroke="#2a2c31" stroke-width="1"/>
<line x1="878.2" y1="306" x2="878.2" y2="435.6" stroke="#2a2c31" stroke-width="1"/>
<clipPath id="xbucket"><rect x="0" y="433.0" width="886.3" height="20"/></clipPath><g clip-path="url(#xbucket)">
<text x="628.2" y="448.9" font-size="9.2" fill="#ccccdc" text-anchor="middle" stroke="#ccccdc" stroke-width="0.15" textLength="22" lengthAdjust="spacingAndGlyphs">21:35</text>
<text x="753.8" y="448.9" font-size="9.2" fill="#ccccdc" text-anchor="middle" stroke="#ccccdc" stroke-width="0.15" textLength="22" lengthAdjust="spacingAndGlyphs">21:40</text>
<text x="878.2" y="448.9" font-size="9.2" fill="#ccccdc" text-anchor="middle" stroke="#ccccdc" stroke-width="0.15" textLength="22" lengthAdjust="spacingAndGlyphs">21:45</text>
</g>
<clipPath id="cbucket"><rect x="506" y="283.0" width="375.1" height="170"/></clipPath>
<g clip-path="url(#cbucket)">
<rect x="506" y="317.5" width="2.3" height="118.4" fill="#fade2a"/>
<rect x="587.1" y="317.5" width="8" height="118.4" fill="#f2cc0c"/>
<rect x="587.1" y="317.5" width="1" height="118.4" fill="#fade2a"/>
<rect x="594.1" y="317.5" width="1" height="118.4" fill="#fade2a"/>
<rect x="587.1" y="317.5" width="8" height="1" fill="#fade2a"/>
<rect x="749.7" y="317.5" width="8" height="118.4" fill="#f2cc0c"/>
<rect x="749.7" y="317.5" width="1" height="118.4" fill="#fade2a"/>
<rect x="756.7" y="317.5" width="1" height="118.4" fill="#fade2a"/>
<rect x="749.7" y="317.5" width="8" height="1" fill="#fade2a"/>
<rect x="487.02" y="434.9" width="8" height="1.4" fill="#dcbc0c"/>
<rect x="499.51" y="434.9" width="8" height="1.4" fill="#dcbc0c"/>
<rect x="512" y="434.9" width="8" height="1.4" fill="#dcbc0c"/>
<rect x="524.49" y="434.9" width="8" height="1.4" fill="#dcbc0c"/>
<rect x="536.98" y="434.9" width="8" height="1.4" fill="#dcbc0c"/>
<rect x="549.47" y="434.9" width="8" height="1.4" fill="#dcbc0c"/>
<rect x="561.96" y="434.9" width="8" height="1.4" fill="#dcbc0c"/>
<rect x="574.45" y="434.9" width="8" height="1.4" fill="#dcbc0c"/>
<rect x="586.94" y="434.9" width="8" height="1.4" fill="#dcbc0c"/>
<rect x="599.43" y="434.9" width="8" height="1.4" fill="#dcbc0c"/>
<rect x="611.92" y="434.9" width="8" height="1.4" fill="#dcbc0c"/>
<rect x="624.41" y="434.9" width="8" height="1.4" fill="#dcbc0c"/>
<rect x="636.9" y="434.9" width="8" height="1.4" fill="#dcbc0c"/>
<rect x="649.39" y="434.9" width="8" height="1.4" fill="#dcbc0c"/>
<rect x="661.88" y="434.9" width="8" height="1.4" fill="#dcbc0c"/>
<rect x="674.37" y="434.9" width="8" height="1.4" fill="#dcbc0c"/>
<rect x="686.86" y="434.9" width="8" height="1.4" fill="#dcbc0c"/>
<rect x="699.35" y="434.9" width="8" height="1.4" fill="#dcbc0c"/>
<rect x="711.84" y="434.9" width="8" height="1.4" fill="#dcbc0c"/>
<rect x="724.33" y="434.9" width="8" height="1.4" fill="#dcbc0c"/>
<rect x="736.82" y="434.9" width="8" height="1.4" fill="#dcbc0c"/>
<rect x="749.31" y="434.9" width="8" height="1.4" fill="#dcbc0c"/>
<rect x="761.8" y="434.9" width="8" height="1.4" fill="#dcbc0c"/>
<rect x="774.29" y="434.9" width="8" height="1.4" fill="#dcbc0c"/>
<rect x="786.78" y="434.9" width="8" height="1.4" fill="#dcbc0c"/>
<rect x="799.27" y="434.9" width="8" height="1.4" fill="#dcbc0c"/>
<rect x="811.76" y="434.9" width="8" height="1.4" fill="#dcbc0c"/>
<rect x="824.25" y="434.9" width="8" height="1.4" fill="#dcbc0c"/>
<rect x="836.74" y="434.9" width="8" height="1.4" fill="#dcbc0c"/>
<rect x="849.23" y="434.9" width="8" height="1.4" fill="#dcbc0c"/>
<rect x="861.72" y="434.9" width="8" height="1.4" fill="#dcbc0c"/>
<rect x="874.21" y="434.9" width="8" height="1.4" fill="#dcbc0c"/>
</g>
<line x1="458.9" y1="466.3" x2="885.7" y2="466.3" stroke="#25272d" stroke-width="1"/>
<line x1="458.9" y1="483.8" x2="885.7" y2="483.8" stroke="#25272d" stroke-width="1"/>
<line x1="458.9" y1="501.2" x2="885.7" y2="501.2" stroke="#25272d" stroke-width="1"/>
<text x="834.9" y="461.8" font-size="9.1" fill="#6e9fff" text-anchor="end" stroke="#6e9fff" stroke-width="0.15">Mean</text>
<text x="879.7" y="461.8" font-size="9.1" fill="#6e9fff" text-anchor="end" stroke="#6e9fff" stroke-width="0.15">Last *</text>
<rect x="464.5" y="474.5" width="10" height="3" fill="#73bf69" rx="1.5"/>
<text x="480.2" y="478.7" font-size="9.4" fill="#ccccdc" text-anchor="start" stroke="#ccccdc" stroke-width="0.15" textLength="95.7" lengthAdjust="spacingAndGlyphs">successful bucket pulls</text>
<text x="834.9" y="478.7" font-size="9.1" fill="#ccccdc" text-anchor="end" stroke="#ccccdc" stroke-width="0.15">0 ops/m</text>
<text x="880.3" y="478.7" font-size="9.1" fill="#ccccdc" text-anchor="end" stroke="#ccccdc" stroke-width="0.15">0 ops/m</text>
<rect x="464.5" y="491.5" width="10" height="3" fill="#f2cc0c" rx="1.5"/>
<text x="480.2" y="495.7" font-size="9.4" fill="#ccccdc" text-anchor="start" stroke="#ccccdc" stroke-width="0.15" textLength="74.2" lengthAdjust="spacingAndGlyphs">failed bucket pulls</text>
<text x="834.9" y="495.7" font-size="9.1" fill="#ccccdc" text-anchor="end" stroke="#ccccdc" stroke-width="0.15">0.194 ops/m</text>
<text x="880.3" y="495.7" font-size="9.1" fill="#ccccdc" text-anchor="end" stroke="#ccccdc" stroke-width="0.15">0 ops/m</text>
</svg>
</body></html>
